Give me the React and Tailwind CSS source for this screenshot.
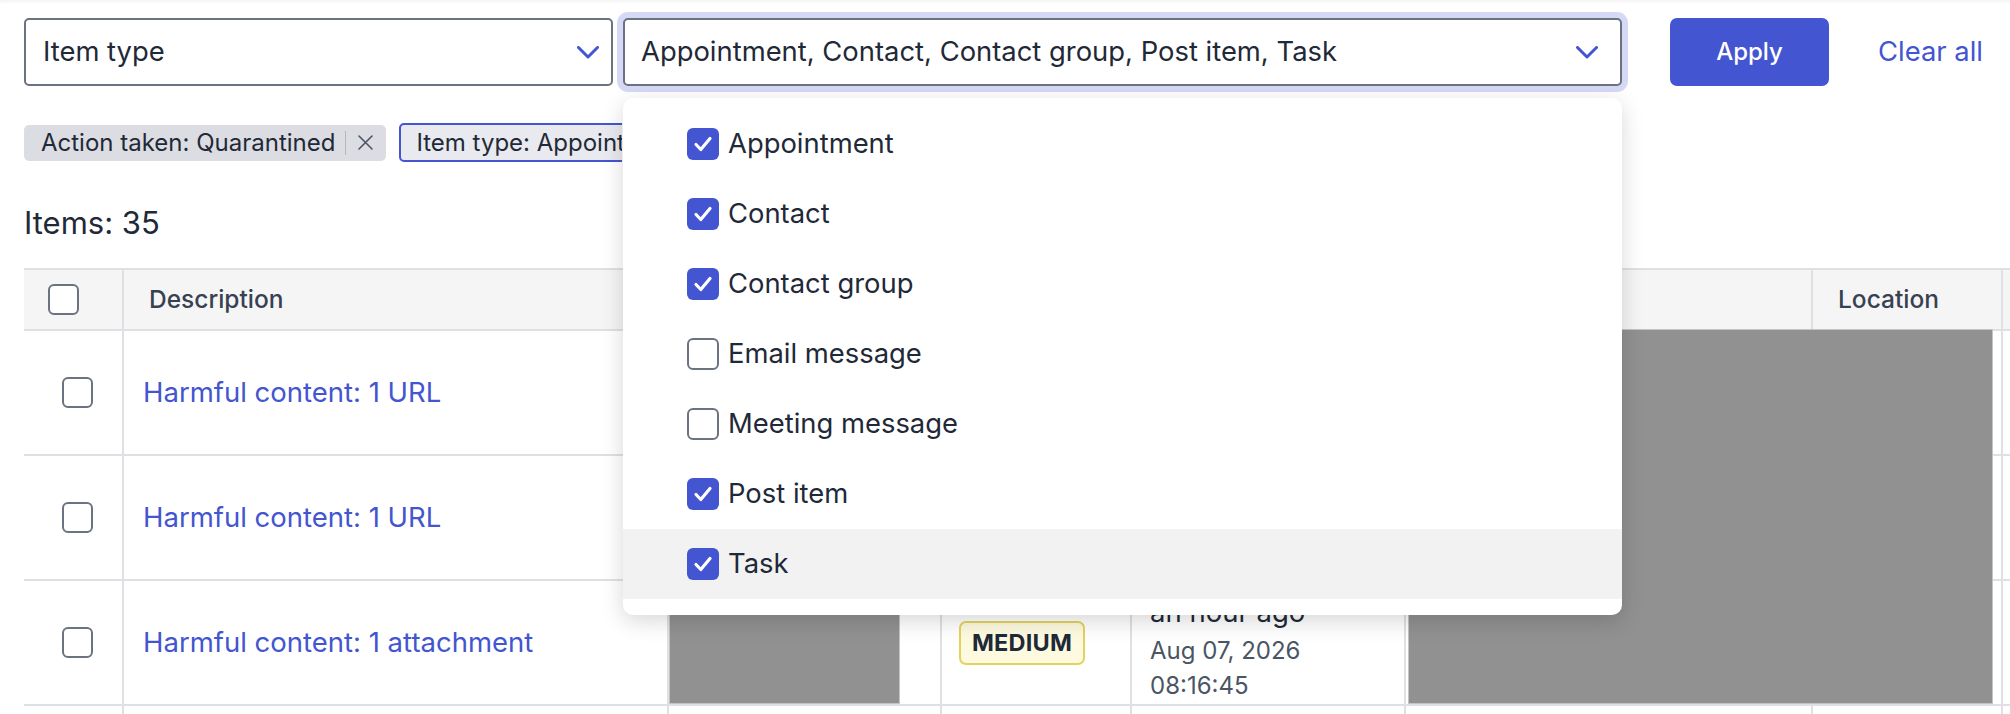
import React from "react";

const Chevron = () => (
  <svg width="22" height="13" viewBox="0 0 22 13" fill="none">
    <path d="M1.5 1.5L11 11L20.5 1.5" stroke="#4355d0" strokeWidth="3" strokeLinecap="round" strokeLinejoin="round" />
  </svg>
);

const Box = ({ checked }) =>
  checked ? (
    <div className="flex h-[32px] w-[32px] shrink-0 items-center justify-center rounded-[6px] bg-[#4355d0]">
      <svg width="24" height="24" viewBox="0 0 24 24" fill="none">
        <path d="M5 12.5L9.8 17.5L19 6.5" stroke="white" strokeWidth="3.2" strokeLinecap="round" strokeLinejoin="round" />
      </svg>
    </div>
  ) : (
    <div className="h-[32px] w-[32px] shrink-0 rounded-[6px] border-2 border-[#6b7280] bg-white" />
  );

const RowBox = () => <div className="h-[31px] w-[31px] rounded-[6px] border-2 border-[#6b7280] bg-white" />;

const XIcon = () => (
  <svg width="17" height="17" viewBox="0 0 17 17" fill="none">
    <path d="M2 2L15 15M15 2L2 15" stroke="#4b5563" strokeWidth="1.6" strokeLinecap="round" />
  </svg>
);

const options = [
  ["Appointment", true],
  ["Contact", true],
  ["Contact group", true],
  ["Email message", false],
  ["Meeting message", false],
  ["Post item", true],
  ["Task", true],
];

const cell = "border-r-2 border-b-2 border-[#e0e0e4]";
const hcell = `${cell} flex h-[61px] items-center bg-[#f5f5f5] pl-[25px] text-[24.5px] font-medium text-[#374151]`;

function Row({ text, full }) {
  return (
    <>
      <div className={`${cell} flex h-[125px] items-center pl-[38px]`}>{text && <RowBox />}</div>
      <div className={`${cell} flex h-[125px] items-center pl-[19px] text-[27.5px] text-[#4355d0]`}>{text}</div>
      <div className={`${cell} flex h-[125px] items-end`}>
        {full && <div className="h-[118px] w-[231px] border border-[#c4c4c4] bg-[#919191]" />}
      </div>
      <div className={`${cell} flex h-[125px] items-center pl-[17px]`}>
        {full && (
          <span className="flex h-[44px] items-center rounded-[7px] border-2 border-[#e3d35c] bg-[#fdfadf] px-[11px] text-[23.5px] font-bold tracking-[0.2px] text-[#1f2937]">
            MEDIUM
          </span>
        )}
      </div>
      <div className={`${cell} flex h-[125px] flex-col justify-end pb-[1px] pl-[18px]`}>
        {full && (
          <>
            <span className="text-[27.5px] leading-[42px] text-[#1f2937]">an hour ago</span>
            <span className="text-[24px] leading-[35px] text-[#4b5563]">Aug 07, 2026</span>
            <span className="text-[24px] leading-[35px] text-[#4b5563]">08:16:45</span>
          </>
        )}
      </div>
      <div className={`${cell} h-[125px]`} />
      <div className={`${cell} h-[125px]`} />
      <div className="h-[125px] border-b-2 border-[#e0e0e4]" />
    </>
  );
}

export default function App() {
  return (
    <div className="relative h-[714px] w-[2010px] overflow-hidden bg-white font-['Inter',sans-serif] text-[#1f2937] shadow-[inset_0_4px_4px_-3px_rgba(0,0,0,0.07)]">
      <div className="pl-[24px] pt-[18px]">
        {/* Filter bar */}
        <div className="flex items-center">
          <div className="flex h-[68px] w-[589px] items-center justify-between rounded-[5px] border-2 border-[#6b7280] pl-[17px] pr-[12px]">
            <span className="text-[27.4px]">Item type</span>
            <Chevron />
          </div>
          <div className="relative z-20 ml-[10px] w-[999px]">
            <div className="flex h-[68px] items-center justify-between rounded-[5px] border-2 border-[#6b7280] bg-white pl-[16px] pr-[22px] ring-[6px] ring-[#d6d9f5]">
              <span className="text-[27.4px]">Appointment, Contact, Contact group, Post item, Task</span>
              <Chevron />
            </div>
            <div className="absolute left-0 top-[80px] w-[999px] rounded-[10px] bg-white pb-[16px] pt-[11px] shadow-[0_6px_22px_rgba(0,0,0,0.16)]">
              {options.map(([label, checked]) => (
                <div
                  key={label}
                  className={`flex h-[70px] items-center gap-[9px] pl-[64px] ${label === "Task" ? "bg-[#f2f2f2]" : ""}`}
                >
                  <Box checked={checked} />
                  <span className="text-[27.4px] text-[#1f2937]">{label}</span>
                </div>
              ))}
            </div>
          </div>
          <button className="ml-[48px] h-[68px] w-[159px] rounded-[7px] bg-[#4355d0] text-[24px] font-medium text-white">
            Apply
          </button>
          <span className="ml-[49px] text-[27.4px] text-[#4355d0]">Clear all</span>
        </div>

        {/* Chips */}
        <div className="mt-[37px] w-[598px] overflow-hidden">
          <div className="flex items-center gap-[13px] whitespace-nowrap">
            <div className="flex h-[36px] shrink-0 items-center rounded-[5px] bg-[#dcdde2] pl-[17px] pr-[12px] text-[24px] text-[#1f2937]">
              <span>Action taken: Quarantined</span>
              <span className="ml-[10px] h-[24px] w-[1px] bg-[#b5b6bb]" />
              <span className="ml-[11px] flex items-center">
                <XIcon />
              </span>
            </div>
            <div className="flex h-[39px] shrink-0 items-center rounded-[5px] border-2 border-[#4355d0] bg-[#e9eaef] pl-[15px] pr-[12px] text-[24px] text-[#1f2937]">
              <span>Item type: Appointment</span>
            </div>
          </div>
        </div>

        <div className="mt-[42px] text-[31px] leading-[38px] text-[#1f2937]">Items: 35</div>

        {/* Table */}
        <div className="relative mt-[26px]">
          <div className="grid grid-cols-[100px_545px_273px_190px_274px_407px_190px_200px] border-t-2 border-[#e0e0e4]">
            <div className={`${cell} flex h-[61px] items-center bg-[#f5f5f5] pl-[24px]`}>
              <RowBox />
            </div>
            <div className={hcell}>Description</div>
            <div className={hcell} />
            <div className={hcell} />
            <div className={hcell} />
            <div className={hcell} />
            <div className={`${hcell} pl-[23px]`}>Location</div>
            <div className="h-[61px] border-b-2 border-[#e0e0e4] bg-[#f5f5f5]" />

            <Row text="Harmful content: 1 URL" />
            <Row text="Harmful content: 1 URL" />
            <Row text="Harmful content: 1 attachment" full />
            <Row />
          </div>
          {/* redaction overlay */}
          <div className="absolute left-[1384px] top-[61px] h-[375px] w-[585px] border border-[#c4c4c4] bg-[#919191]" />
        </div>
      </div>
    </div>
  );
}
